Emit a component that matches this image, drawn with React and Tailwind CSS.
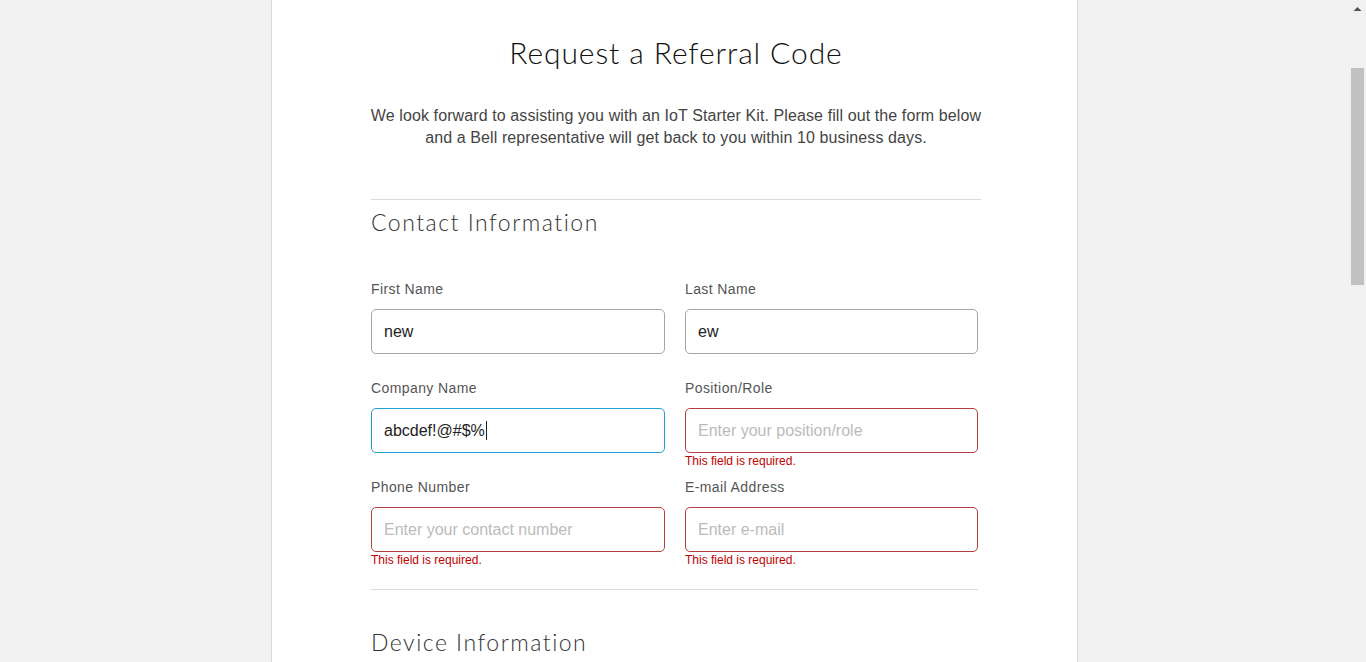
import React from "react";

const Field = ({ label, value, placeholder, state, caret }) => {
  const border =
    state === "error"
      ? "border-[#b3403e]"
      : state === "focus"
      ? "border-[#23a0d8]"
      : "border-[#a6a6a6]";
  return (
    <div className="flex flex-col">
      <div className="h-[20px] shrink-0 text-[14px] leading-[20px] tracking-[0.4px] text-[#555555] font-['Liberation_Sans',Arial,sans-serif]">
        {label}
      </div>
      <div
        className={`mt-[10px] flex h-[45px] shrink-0 items-center rounded-[5px] border ${border} bg-white px-[12px] text-[16px] font-['Liberation_Sans',Arial,sans-serif]`}
      >
        {value ? (
          <span className="text-[#222222]">{value}</span>
        ) : (
          <span className="text-[#bbbbbb]">{placeholder}</span>
        )}
        {caret && <span className="ml-[1px] inline-block h-[19px] w-[1px] bg-[#222222]" />}
      </div>
      <div className="h-[24px] shrink-0 pt-[1px] text-[12px] leading-[14px] text-[#c20000] font-['Liberation_Sans',Arial,sans-serif]">
        {state === "error" ? "This field is required." : ""}
      </div>
    </div>
  );
};

export default function App() {
  return (
    <div className="flex h-[662px] w-[1366px] overflow-hidden bg-[#f2f2f2]">
      <div className="flex flex-1 items-start justify-center">
        <div className="flex min-h-[662px] w-[807px] shrink-0 flex-col border-x border-[#dadada] bg-white pl-[99px] pr-[96px] pt-[34px]">
          <h1 className="h-[36px] shrink-0 text-center text-[30px] leading-[36px] font-light tracking-[0.9px] text-[#111111] font-['Lato',sans-serif]">
            Request a Referral Code
          </h1>
          <p className="-mx-[12px] mt-[35px] shrink-0 whitespace-nowrap text-center text-[16px] leading-[22px] tracking-[0.1px] text-[#444444] font-['Liberation_Sans',Arial,sans-serif]">
            We look forward to assisting you with an IoT Starter Kit. Please fill out the form below
            <br />
            and a Bell representative will get back to you within 10 business days.
          </p>
          <div className="mt-[50px] h-px w-full shrink-0 bg-[#dcdcdc]" />
          <h2 className="mt-[8px] h-[28px] shrink-0 text-[23px] leading-[28px] font-light tracking-[1.5px] text-[#333333] font-['Lato',sans-serif]">
            Contact Information
          </h2>
          <div className="mt-[43px] grid w-[607px] shrink-0 grid-cols-[294px_293px] gap-x-[20px]">
            <Field label="First Name" value="new" />
            <Field label="Last Name" value="ew" />
            <Field label="Company Name" value="abcdef!@#$%" state="focus" caret />
            <Field label="Position/Role" placeholder="Enter your position/role" state="error" />
            <Field label="Phone Number" placeholder="Enter your contact number" state="error" />
            <Field label="E-mail Address" placeholder="Enter e-mail" state="error" />
          </div>
          <div className="mt-[13px] h-px w-[607px] shrink-0 bg-[#dcdcdc]" />
          <h2 className="mt-[38px] h-[28px] shrink-0 text-[23px] leading-[28px] font-light tracking-[1.5px] text-[#333333] font-['Lato',sans-serif]">
            Device Information
          </h2>
        </div>
      </div>
      <div className="flex w-[17px] shrink-0 flex-col items-center bg-[#f1f1f1]">
        <svg width="17" height="17" viewBox="0 0 17 17">
          <path d="M4.5 11 L8.5 7 L12.5 11 Z" fill="#505050" />
        </svg>
        <div className="mt-[51px] h-[217px] w-[13px] bg-[#c1c1c1]" />
      </div>
    </div>
  );
}
